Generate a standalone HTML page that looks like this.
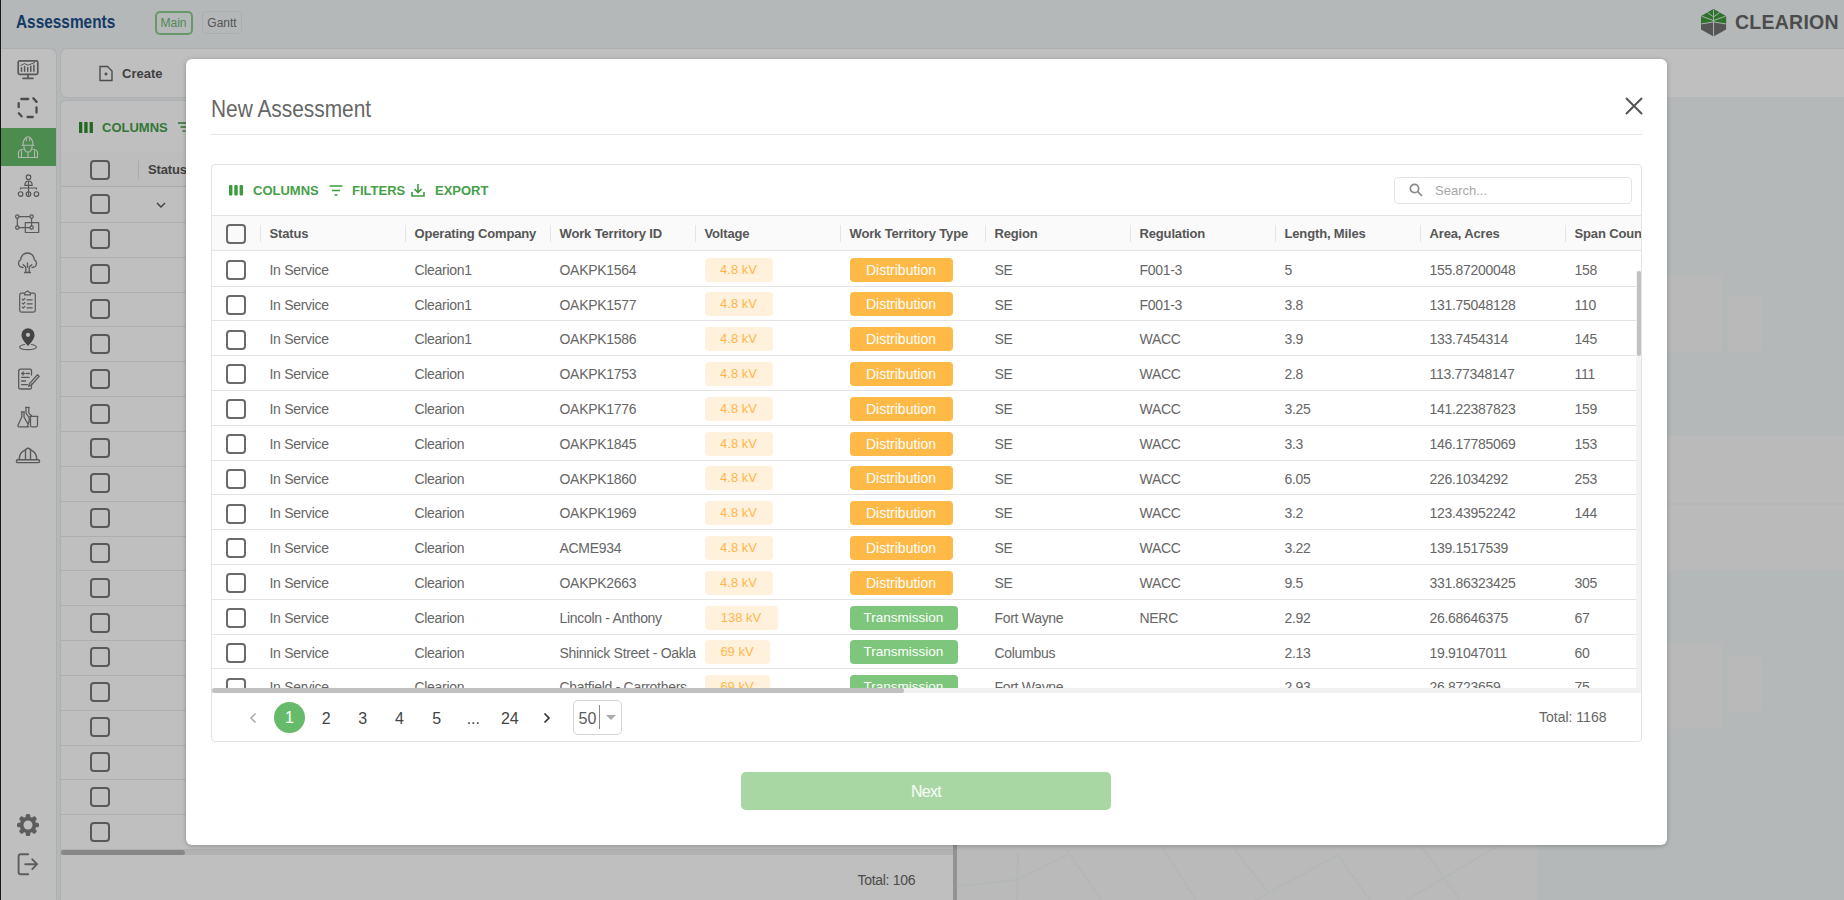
<!DOCTYPE html><html><head><meta charset="utf-8"><title>New Assessment</title><style>
*{box-sizing:border-box;margin:0;padding:0}
html,body{width:1844px;height:900px;overflow:hidden;font-family:"Liberation Sans",sans-serif;background:#f3f7f8;position:relative}
.abs{position:absolute}
#hdr{position:absolute;left:0;top:0;width:1844px;height:49px;background:#f1f6f7}
#side{position:absolute;left:1px;top:49px;width:55px;height:851px;background:#fff;border-radius:0 6px 0 0;box-shadow:0 0 2px rgba(0,0,0,.18)}
#createp{position:absolute;left:61px;top:49px;width:1800px;height:48px;background:#fff;border-radius:6px;box-shadow:0 0 2px rgba(0,0,0,.18)}
#tablep{position:absolute;left:61px;top:101px;width:894px;height:820px;background:#fff;border-radius:4px 4px 0 0;box-shadow:0 0 2px rgba(0,0,0,.18);overflow:hidden}
#map{position:absolute;left:957px;top:97px;width:887px;height:803px;background:#f2f6f7;overflow:hidden}
#overlay{position:absolute;left:0;top:0;width:1844px;height:900px;background:rgba(0,0,0,.25)}
#modal{position:absolute;left:186px;top:59px;width:1481px;height:786px;background:#fff;border-radius:6px;box-shadow:0 1px 5px rgba(0,0,0,.25)}
.cb{position:absolute;width:20px;height:20px;border:2px solid #6a6a6a;border-radius:4px;background:#fff}
.bcb{position:absolute;width:20px;height:20px;border:2px solid #777;border-radius:4px}
.t13{font-size:14px;letter-spacing:-0.3px;color:#666;white-space:nowrap;position:absolute;line-height:14px}
.th{font-size:13px;font-weight:bold;color:#565656;letter-spacing:-0.15px;white-space:nowrap;position:absolute}
.chipD{position:absolute;height:24px;border-radius:4px;background:#ffb946;color:#fff;font-size:14px;text-align:center;line-height:24px;white-space:nowrap}
.chipT{position:absolute;height:24px;border-radius:4px;background:#7dc67b;color:#fff;font-size:13.5px;text-align:center;line-height:24px;white-space:nowrap}
.chipV{position:absolute;height:24px;border-radius:4px;background:#fff1dc;color:#ffb74d;font-size:13px;text-align:center;line-height:24px;white-space:nowrap}
.green{color:#45a048}
</style></head><body>
<div id="hdr">
<div class="abs" style="left:16px;top:11px;font-size:19px;font-weight:bold;color:#1b4f8a;white-space:nowrap;transform-origin:0 0;transform:scaleX(0.81)">Assessments</div>
<div class="abs" style="left:154.5px;top:10.5px;width:38px;height:24px;border:2px solid #8acb8c;border-radius:5px;font-size:12px;color:#6cb86e;text-align:center;line-height:21px">Main</div>
<div class="abs" style="left:202px;top:11px;width:40px;height:23px;border:1px solid #e4e8e9;border-radius:4px;font-size:12px;color:#707070;text-align:center;line-height:22px">Gantt</div>
<svg class="abs" style="left:1701.2px;top:8.6px;overflow:visible" width="25.1" height="27.4" viewBox="0 0 25.1 27.4"><polygon points="12.55,0 25.1,7.2 25.1,20.4 12.55,27.4 0,20.4 0,7.2" fill="#727272"/><polygon points="12.55,0 25.1,7.2 25.1,14.8 12.55,13.0 0,14.8 0,7.2" fill="#3d9a3c"/><path d="M12.55 0.5V27.4 M0.3 14.9L12.55 13.0L24.8 14.9 M0.6 7.2L12.55 11.6L24.5 7.2 M12.55 7.9L6.4 3.5 M12.55 7.9L18.7 3.5" stroke="#f3f6f7" stroke-width="0.9" fill="none"/></svg>
<div class="abs" style="left:1735px;top:13px;font-size:19.5px;line-height:19.5px;font-weight:bold;color:#666;letter-spacing:0.25px;white-space:nowrap">CLEARION</div>
</div>
<div class="abs" style="left:0;top:0;width:1px;height:900px;background:#222"></div>
<div id="side">
<div class="abs" style="left:0;top:78.5px;width:55px;height:38.5px;background:#66bb6a"></div>
</div>
<svg class="abs" style="left:16px;top:58px" width="24" height="22" viewBox="0 0 24 22" fill="none" stroke="#777" stroke-width="1.3" stroke-linecap="round" stroke-linejoin="round"><rect x="2.2" y="2.8" width="19.6" height="13.6" rx="1.6" stroke-width="1.7"/><path d="M7 20.3h10 M12 16.4v3.5" stroke-width="1.7"/><path d="M5.5 13.2V9.8 M8.6 13.2V8.6 M11.7 13.2V9.4 M14.8 13.2V8.2 M17.9 13.2V7.2" stroke-width="1.5"/><path d="M4.8 7.4L8.5 5.6L12 7.2L18.6 4.6" stroke-width="1"/></svg>
<svg class="abs" style="left:16px;top:96px" width="24" height="24" viewBox="0 0 24 24" fill="none" stroke="#666" stroke-width="2.3" stroke-linecap="round" stroke-linejoin="round"><path d="M5.3 3h6.9 M17.3 2.3l3.3 3.6 M20.5 11.5v5 M11.5 21h5.3 M2.8 17.3l2.8 3 M2.7 7.2v4"/></svg>
<svg class="abs" style="left:17px;top:134px" width="22" height="25" viewBox="0 0 22 25" fill="none" stroke="#eef5ee" stroke-width="1.1" stroke-linecap="round" stroke-linejoin="round"><path d="M5 11.2h12 M6 11c0-4.8 2.2-8.2 5-8.2s5 3.4 5 8.2 M9.3 3.2v3.5 M12.7 3.2v3.5 M6.8 11.5c.2 4 1.9 6.6 4.2 6.6s4-2.6 4.2-6.6 M1.5 23.5v-5c0-1.9 1.5-2.7 4.6-3.2 M20.5 23.5v-5c0-1.9-1.5-2.7-4.6-3.2 M1.5 23.5h19 M11 18.2v5.3 M4.5 17v6.5 M17.5 17v6.5"/></svg>
<svg class="abs" style="left:17px;top:173px" width="23" height="25" viewBox="0 0 23 25" fill="none" stroke="#707070" stroke-width="1.15" stroke-linecap="round" stroke-linejoin="round"><circle cx="11.5" cy="4.2" r="2.3"/><path d="M7.8 12.4c0-2.6 1.6-4.4 3.7-4.4s3.7 1.8 3.7 4.4z M11.5 8v13.8 M3.5 16v-1 h16v1"/><circle cx="3.6" cy="21" r="2.3"/><circle cx="11.5" cy="21" r="2.3"/><circle cx="19.4" cy="21" r="2.3"/></svg>
<svg class="abs" style="left:15px;top:214px" width="26" height="21" viewBox="0 0 26 21" fill="none" stroke="#777" stroke-width="1.2" stroke-linecap="round" stroke-linejoin="round"><path d="M4 2.6h10.8 M2.3 4.3v7.6 M4 13.6h10.8 M16.6 4.3v7.6"/><circle cx="2.3" cy="2.6" r="1.7"/><circle cx="16.6" cy="2.6" r="1.7"/><circle cx="2.3" cy="13.6" r="1.7"/><circle cx="16.6" cy="13.6" r="1.7"/><rect x="10.3" y="8.7" width="13.4" height="9.8"/></svg>
<svg class="abs" style="left:16px;top:251px" width="23" height="23" viewBox="0 0 23 23" fill="none" stroke="#777" stroke-width="1.3" stroke-linecap="round" stroke-linejoin="round"><path d="M9.8 21.3v-5.2l-2.6-2.4 M13.2 21.3v-5.2l2.6-2.4 M11.5 16v-4 M8.5 21.5h6 M7 16.5C4.3 16.5 2.5 14.6 2.5 12.3c0-1.6.9-3 2.2-3.6C4.8 5.2 7.5 2 11.5 2s6.7 3.2 6.8 6.7c1.3.6 2.2 2 2.2 3.6 0 2.3-1.8 4.2-4.5 4.2"/></svg>
<svg class="abs" style="left:17px;top:289px" width="21" height="24" viewBox="0 0 21 24" fill="none" stroke="#777" stroke-width="1.2" stroke-linecap="round" stroke-linejoin="round"><path d="M7.5 4.2H4.5A1.8 1.8 0 0 0 2.7 6v15.3a1.8 1.8 0 0 0 1.8 1.8h12A1.8 1.8 0 0 0 18.3 21.3V6a1.8 1.8 0 0 0-1.8-1.8h-3 M7.5 5.8c0-1.6.2-2 1-2.5l2-1.3 2 1.3c.8.5 1 .9 1 2.5z M5.3 10.2l1 1 1.6-1.8 M5.3 14.2l1 1 1.6-1.8 M5.3 18.2l1 1 1.6-1.8 M10 10.8h5.2 M10 14.8h5.2 M10 18.8h5.2"/></svg>
<svg class="abs" style="left:17px;top:328px" width="22" height="24" viewBox="0 0 22 24" fill="none" stroke="#777" stroke-width="1.2" stroke-linecap="round" stroke-linejoin="round"><path d="M11 17.2c-3.4-3.8-6-6.8-6-10.3a6 6 0 0 1 12 0c0 3.5-2.6 6.5-6 10.3z" fill="#5a5a5a" stroke="#5a5a5a"/><circle cx="11" cy="6.8" r="2.1" fill="#fff" stroke="none"/><path d="M7.6 16.5C4.5 17 2.7 17.9 2.7 19c0 1.6 3.7 2.6 8.3 2.6s8.3-1 8.3-2.6c0-1.1-1.8-2-4.9-2.5"/></svg>
<svg class="abs" style="left:16px;top:367px" width="24" height="24" viewBox="0 0 24 24" fill="none" stroke="#777" stroke-width="1.3" stroke-linecap="round" stroke-linejoin="round"><path d="M15.5 8V3.8a1.6 1.6 0 0 0-1.6-1.6H4.3a1.6 1.6 0 0 0-1.6 1.6v16.6a1.6 1.6 0 0 0 1.6 1.6h9.6a1.6 1.6 0 0 0 1.6-1.6v-3.4 M5.6 6.5h3 M7.1 5v3 M10.3 6.5h3 M5.6 10.3h7.6 M5.6 14h4 M5.6 17.7h5.8 M21.5 7.8l-8 8.8-.9 2.6 2.6-1 8-8.8z"/></svg>
<svg class="abs" style="left:16px;top:405px" width="25" height="25" viewBox="0 0 25 25" fill="none" stroke="#777" stroke-width="1.25" stroke-linecap="round" stroke-linejoin="round"><path d="M5.3 6.8h3.2 M5.8 6.8v5.2L2 20.2c-.4.9.2 1.6 1.1 1.6H13 M8 6.8v5.2l3.6 6.4 M9.6 2.4h3.6 M10 2.4v5.6c0 1.6 3.3 2.8 3.3 6.2 0 3.4-1.8 5.6-1.8 7.6 M12.8 2.4v5.6c0 .9 1.7 1.6 2.8 2.6 M13.9 11.4h8 M14.5 11.4v9.2c0 .7.5 1.2 1.2 1.2h4.6c.7 0 1.2-.5 1.2-1.2v-9.2"/></svg>
<svg class="abs" style="left:15px;top:445px" width="26" height="20" viewBox="0 0 26 20" fill="none" stroke="#777" stroke-width="1.4" stroke-linecap="round" stroke-linejoin="round"><path d="M2.8 14.8h20.4a1.4 1.4 0 0 1 0 2.8H2.8a1.4 1.4 0 0 1 0-2.8z M4.2 14.6C4.2 9.8 6.5 6.3 10.2 4.8 M21.8 14.6C21.8 9.8 19.5 6.3 15.8 4.8 M10.5 14.6V5.6c0-1.3 1.1-2.3 2.5-2.3s2.5 1 2.5 2.3v9"/></svg>
<svg class="abs" style="left:16.9px;top:814.2px" width="22" height="22" viewBox="-11 -11 22 22"><g fill="#7c7c7c"><circle r="8.3"/><rect x="-2.3" y="-11" width="4.6" height="5" rx="1.6" transform="rotate(0)"/><rect x="-2.3" y="-11" width="4.6" height="5" rx="1.6" transform="rotate(45)"/><rect x="-2.3" y="-11" width="4.6" height="5" rx="1.6" transform="rotate(90)"/><rect x="-2.3" y="-11" width="4.6" height="5" rx="1.6" transform="rotate(135)"/><rect x="-2.3" y="-11" width="4.6" height="5" rx="1.6" transform="rotate(180)"/><rect x="-2.3" y="-11" width="4.6" height="5" rx="1.6" transform="rotate(225)"/><rect x="-2.3" y="-11" width="4.6" height="5" rx="1.6" transform="rotate(270)"/><rect x="-2.3" y="-11" width="4.6" height="5" rx="1.6" transform="rotate(315)"/></g><circle r="4.5" fill="#fff"/></svg>
<svg class="abs" style="left:16px;top:852px" width="24" height="24" viewBox="0 0 24 24" fill="none" stroke="#7c7c7c" stroke-width="1.9" stroke-linecap="round" stroke-linejoin="round"><path d="M12.2 2.2H4.6a2 2 0 0 0-2 2v16a2 2 0 0 0 2 2h7.6 M9.2 12.2h11.8 M16.3 7.3l4.8 4.9-4.8 4.9"/></svg>
<div id="createp">
<svg class="abs" style="left:37px;top:16px" width="16" height="17" viewBox="0 0 16 17" fill="none" stroke="#666" stroke-width="1.4"><path d="M2 1.5h7.5l4.5 4.5v9.5h-12z"/><path d="M8 7.5v3 M6.5 9h3"/></svg>
<div class="abs" style="left:61px;top:17px;font-size:13px;font-weight:bold;color:#555;white-space:nowrap">Create</div>
</div>
<div id="tablep">
<svg class="abs" style="left:18px;top:21px" width="14" height="11" viewBox="0 0 14 11"><rect x="0" y="0" width="3.3" height="11" fill="#2e8b2e"/><rect x="5.3" y="0" width="3.3" height="11" fill="#2e8b2e"/><rect x="10.6" y="0" width="3.3" height="11" fill="#2e8b2e"/></svg>
<div class="abs green" style="left:41px;top:19px;font-size:13px;font-weight:bold;white-space:nowrap">COLUMNS</div>
<svg class="abs" style="left:117px;top:21px" width="12" height="10" viewBox="0 0 12 10" stroke="#3e9b3e" stroke-width="1.5"><path d="M0 1h12 M2.5 5h7 M4.5 9h3"/></svg>
<div class="abs" style="left:0;top:51px;width:894px;height:1px;background:#e3e3e3"></div>
<div class="abs" style="left:0;top:51px;width:894px;height:35px;background:#fcfcfc;border-bottom:1px solid #e3e3e3"></div>
<div class="abs" style="left:77px;top:60px;width:1px;height:18px;background:#e5e5e5"></div>
<div class="th" style="left:87px;top:61px">Status</div>
<div class="bcb" style="left:28.5px;top:59px;background:#fff"></div>
<div class="bcb" style="left:28.5px;top:93.40px;background:#fff"></div>
<div class="abs" style="left:0;top:120.85px;width:894px;height:1px;background:#e8e8e8"></div>
<div class="bcb" style="left:28.5px;top:128.25px;background:#fff"></div>
<div class="abs" style="left:0;top:155.70px;width:894px;height:1px;background:#e8e8e8"></div>
<div class="bcb" style="left:28.5px;top:163.10px;background:#fff"></div>
<div class="abs" style="left:0;top:190.55px;width:894px;height:1px;background:#e8e8e8"></div>
<div class="bcb" style="left:28.5px;top:197.95px;background:#fff"></div>
<div class="abs" style="left:0;top:225.40px;width:894px;height:1px;background:#e8e8e8"></div>
<div class="bcb" style="left:28.5px;top:232.80px;background:#fff"></div>
<div class="abs" style="left:0;top:260.25px;width:894px;height:1px;background:#e8e8e8"></div>
<div class="bcb" style="left:28.5px;top:267.65px;background:#fff"></div>
<div class="abs" style="left:0;top:295.10px;width:894px;height:1px;background:#e8e8e8"></div>
<div class="bcb" style="left:28.5px;top:302.50px;background:#fff"></div>
<div class="abs" style="left:0;top:329.95px;width:894px;height:1px;background:#e8e8e8"></div>
<div class="bcb" style="left:28.5px;top:337.35px;background:#fff"></div>
<div class="abs" style="left:0;top:364.80px;width:894px;height:1px;background:#e8e8e8"></div>
<div class="bcb" style="left:28.5px;top:372.20px;background:#fff"></div>
<div class="abs" style="left:0;top:399.65px;width:894px;height:1px;background:#e8e8e8"></div>
<div class="bcb" style="left:28.5px;top:407.05px;background:#fff"></div>
<div class="abs" style="left:0;top:434.50px;width:894px;height:1px;background:#e8e8e8"></div>
<div class="bcb" style="left:28.5px;top:441.90px;background:#fff"></div>
<div class="abs" style="left:0;top:469.35px;width:894px;height:1px;background:#e8e8e8"></div>
<div class="bcb" style="left:28.5px;top:476.75px;background:#fff"></div>
<div class="abs" style="left:0;top:504.20px;width:894px;height:1px;background:#e8e8e8"></div>
<div class="bcb" style="left:28.5px;top:511.60px;background:#fff"></div>
<div class="abs" style="left:0;top:539.05px;width:894px;height:1px;background:#e8e8e8"></div>
<div class="bcb" style="left:28.5px;top:546.45px;background:#fff"></div>
<div class="abs" style="left:0;top:573.90px;width:894px;height:1px;background:#e8e8e8"></div>
<div class="bcb" style="left:28.5px;top:581.30px;background:#fff"></div>
<div class="abs" style="left:0;top:608.75px;width:894px;height:1px;background:#e8e8e8"></div>
<div class="bcb" style="left:28.5px;top:616.15px;background:#fff"></div>
<div class="abs" style="left:0;top:643.60px;width:894px;height:1px;background:#e8e8e8"></div>
<div class="bcb" style="left:28.5px;top:651.00px;background:#fff"></div>
<div class="abs" style="left:0;top:678.45px;width:894px;height:1px;background:#e8e8e8"></div>
<div class="bcb" style="left:28.5px;top:685.85px;background:#fff"></div>
<div class="abs" style="left:0;top:713.30px;width:894px;height:1px;background:#e8e8e8"></div>
<div class="bcb" style="left:28.5px;top:720.70px;background:#fff"></div>
<div class="abs" style="left:0;top:748.15px;width:894px;height:1px;background:#e8e8e8"></div>
<svg class="abs" style="left:95px;top:101px" width="10" height="6" viewBox="0 0 10 6" fill="none" stroke="#555" stroke-width="1.4"><path d="M1 1l4 4 4-4"/></svg>
<div class="abs" style="left:0;top:749px;width:894px;height:5px;background:#eee"></div>
<div class="abs" style="left:0;top:749px;width:124px;height:5px;border-radius:3px;background:#b5b5b5"></div>
<div class="abs" style="left:796.5px;top:772.15px;font-size:14px;line-height:14px;letter-spacing:-0.3px;color:#666;white-space:nowrap">Total: 106</div>
</div>
<div class="abs" style="left:953px;top:845px;width:4px;height:55px;background:#c4c4c4"></div>
<div id="map">
<div class="abs" style="left:0;top:339px;width:887px;height:134px;background:#f8f8f8"></div>
<div class="abs" style="left:710px;top:178px;width:55px;height:76px;background:#f7f7f7"></div>
<div class="abs" style="left:771px;top:198px;width:34px;height:56px;background:#f7f7f7"></div>
<div class="abs" style="left:710px;top:546px;width:55px;height:86px;background:#f7f7f7"></div>
<div class="abs" style="left:771px;top:560px;width:34px;height:54px;background:#f7f7f7"></div>
<div class="abs" style="left:0;top:748px;width:580px;height:60px;background:#f8f8f8"></div>
<svg class="abs" style="left:0;top:0" width="887" height="803" viewBox="957 97 887 803" fill="none" stroke="#f0f4f5" stroke-width="1.8"><path d="M957 886L1017 880 M1018 852L1017 900 M1017 880L1067 855 M1067 850L1101 900 M1162 847L1196 900 M1233 847L1267 891 M1255 900L1338 855 M1338 855L1370 900 M1422 847L1460 900 M1407 900L1496 847"/><path d="M957 504H1844" stroke-width="2"/></svg>
</div>
<div id="overlay"></div>
<div id="modal"><div class="abs" style="left:25px;top:37.68px;font-size:24px;line-height:24px;color:#666;white-space:nowrap;transform-origin:0 0;transform:scaleX(0.87)">New Assessment</div><svg class="abs" style="left:1439px;top:38px" width="18" height="18" viewBox="0 0 18 18" stroke="#555" stroke-width="2" stroke-linecap="round"><path d="M1.5 1.5l15 15 M16.5 1.5l-15 15"/></svg><div class="abs" style="left:25px;top:75px;width:1431px;height:1px;background:#e6e6e6"></div><div class="abs" style="left:25px;top:105px;width:1431px;height:578px;border:1px solid #e3e3e3;border-radius:4px;overflow:hidden"><svg class="abs" style="left:17px;top:20px" width="14" height="11" viewBox="0 0 14 11"><rect x="0" y="0" width="3.4" height="10.5" rx="0.9" fill="#3a9a3d"/><rect x="5.3" y="0" width="3.4" height="10.5" rx="0.9" fill="#3a9a3d"/><rect x="10.6" y="0" width="3.4" height="10.5" rx="0.9" fill="#3a9a3d"/></svg><div class="abs green" style="left:41px;top:18px;font-size:13px;font-weight:bold;white-space:nowrap">COLUMNS</div><svg class="abs" style="left:117px;top:20px" width="14" height="11" viewBox="0 0 14 11" stroke="#3e9b3e" stroke-width="1.6"><path d="M0.5 1h13 M3 5.5h8 M5.5 10h3"/></svg><div class="abs green" style="left:140px;top:18px;font-size:13px;font-weight:bold;white-space:nowrap">FILTERS</div><svg class="abs" style="left:199px;top:18px" width="14" height="14" viewBox="0 0 14 14" fill="none" stroke="#3e9b3e" stroke-width="1.6"><path d="M7 1v8 M3.5 6l3.5 3.5 3.5-3.5 M1 9v4h12V9"/></svg><div class="abs green" style="left:223px;top:18px;font-size:13px;font-weight:bold;white-space:nowrap">EXPORT</div><div class="abs" style="left:1182px;top:12px;width:238px;height:27px;border:1px solid #e3e3e3;border-radius:4px"></div><svg class="abs" style="left:1197px;top:18px" width="14" height="14" viewBox="0 0 14 14" fill="none" stroke="#8a8a8a" stroke-width="1.7"><circle cx="5.5" cy="5.5" r="4.2"/><path d="M8.7 8.7l4.3 4.3"/></svg><div class="abs" style="left:1223px;top:18px;font-size:13px;color:#a8a8a8;white-space:nowrap">Search...</div><div class="abs" style="left:0;top:50px;width:1431px;height:36px;background:#fafafa;border-top:1px solid #e3e3e3;border-bottom:1px solid #e3e3e3"></div><div class="cb" style="left:14px;top:59px;background:transparent"></div><div class="abs" style="left:48px;top:60px;width:1px;height:17px;background:#e5e5e5"></div><div class="th" style="left:57.5px;top:61px">Status</div><div class="abs" style="left:193px;top:60px;width:1px;height:17px;background:#e5e5e5"></div><div class="th" style="left:202.5px;top:61px">Operating Company</div><div class="abs" style="left:338px;top:60px;width:1px;height:17px;background:#e5e5e5"></div><div class="th" style="left:347.5px;top:61px">Work Territory ID</div><div class="abs" style="left:483px;top:60px;width:1px;height:17px;background:#e5e5e5"></div><div class="th" style="left:492.5px;top:61px">Voltage</div><div class="abs" style="left:628px;top:60px;width:1px;height:17px;background:#e5e5e5"></div><div class="th" style="left:637.5px;top:61px">Work Territory Type</div><div class="abs" style="left:773px;top:60px;width:1px;height:17px;background:#e5e5e5"></div><div class="th" style="left:782.5px;top:61px">Region</div><div class="abs" style="left:918px;top:60px;width:1px;height:17px;background:#e5e5e5"></div><div class="th" style="left:927.5px;top:61px">Regulation</div><div class="abs" style="left:1063px;top:60px;width:1px;height:17px;background:#e5e5e5"></div><div class="th" style="left:1072.5px;top:61px">Length, Miles</div><div class="abs" style="left:1208px;top:60px;width:1px;height:17px;background:#e5e5e5"></div><div class="th" style="left:1217.5px;top:61px">Area, Acres</div><div class="abs" style="left:1353px;top:60px;width:1px;height:17px;background:#e5e5e5"></div><div class="th" style="left:1362.5px;top:61px">Span Count</div><div class="abs" style="left:0;top:86px;width:1431px;height:437px;overflow:hidden"><div class="abs" style="left:0;top:34.60px;width:1424px;height:1px;background:#e3e3e3"></div><div class="cb" style="left:14px;top:9.00px"></div><div class="t13" style="left:57.5px;top:11.85px">In Service</div><div class="t13" style="left:202.5px;top:11.85px">Clearion1</div><div class="t13" style="left:347.5px;top:11.85px">OAKPK1564</div><div class="chipV" style="left:492.5px;top:6.50px;width:68px">4.8 kV</div><div class="chipD" style="left:637.5px;top:6.50px;width:103px">Distribution</div><div class="t13" style="left:782.5px;top:11.85px">SE</div><div class="t13" style="left:927.5px;top:11.85px">F001-3</div><div class="t13" style="left:1072.5px;top:11.85px">5</div><div class="t13" style="left:1217.5px;top:11.85px">155.87200048</div><div class="t13" style="left:1362.5px;top:11.85px">158</div><div class="abs" style="left:0;top:69.40px;width:1424px;height:1px;background:#e3e3e3"></div><div class="cb" style="left:14px;top:43.80px"></div><div class="t13" style="left:57.5px;top:46.65px">In Service</div><div class="t13" style="left:202.5px;top:46.65px">Clearion1</div><div class="t13" style="left:347.5px;top:46.65px">OAKPK1577</div><div class="chipV" style="left:492.5px;top:41.30px;width:68px">4.8 kV</div><div class="chipD" style="left:637.5px;top:41.30px;width:103px">Distribution</div><div class="t13" style="left:782.5px;top:46.65px">SE</div><div class="t13" style="left:927.5px;top:46.65px">F001-3</div><div class="t13" style="left:1072.5px;top:46.65px">3.8</div><div class="t13" style="left:1217.5px;top:46.65px">131.75048128</div><div class="t13" style="left:1362.5px;top:46.65px">110</div><div class="abs" style="left:0;top:104.20px;width:1424px;height:1px;background:#e3e3e3"></div><div class="cb" style="left:14px;top:78.60px"></div><div class="t13" style="left:57.5px;top:81.45px">In Service</div><div class="t13" style="left:202.5px;top:81.45px">Clearion1</div><div class="t13" style="left:347.5px;top:81.45px">OAKPK1586</div><div class="chipV" style="left:492.5px;top:76.10px;width:68px">4.8 kV</div><div class="chipD" style="left:637.5px;top:76.10px;width:103px">Distribution</div><div class="t13" style="left:782.5px;top:81.45px">SE</div><div class="t13" style="left:927.5px;top:81.45px">WACC</div><div class="t13" style="left:1072.5px;top:81.45px">3.9</div><div class="t13" style="left:1217.5px;top:81.45px">133.7454314</div><div class="t13" style="left:1362.5px;top:81.45px">145</div><div class="abs" style="left:0;top:139.00px;width:1424px;height:1px;background:#e3e3e3"></div><div class="cb" style="left:14px;top:113.40px"></div><div class="t13" style="left:57.5px;top:116.25px">In Service</div><div class="t13" style="left:202.5px;top:116.25px">Clearion</div><div class="t13" style="left:347.5px;top:116.25px">OAKPK1753</div><div class="chipV" style="left:492.5px;top:110.90px;width:68px">4.8 kV</div><div class="chipD" style="left:637.5px;top:110.90px;width:103px">Distribution</div><div class="t13" style="left:782.5px;top:116.25px">SE</div><div class="t13" style="left:927.5px;top:116.25px">WACC</div><div class="t13" style="left:1072.5px;top:116.25px">2.8</div><div class="t13" style="left:1217.5px;top:116.25px">113.77348147</div><div class="t13" style="left:1362.5px;top:116.25px">111</div><div class="abs" style="left:0;top:173.80px;width:1424px;height:1px;background:#e3e3e3"></div><div class="cb" style="left:14px;top:148.20px"></div><div class="t13" style="left:57.5px;top:151.05px">In Service</div><div class="t13" style="left:202.5px;top:151.05px">Clearion</div><div class="t13" style="left:347.5px;top:151.05px">OAKPK1776</div><div class="chipV" style="left:492.5px;top:145.70px;width:68px">4.8 kV</div><div class="chipD" style="left:637.5px;top:145.70px;width:103px">Distribution</div><div class="t13" style="left:782.5px;top:151.05px">SE</div><div class="t13" style="left:927.5px;top:151.05px">WACC</div><div class="t13" style="left:1072.5px;top:151.05px">3.25</div><div class="t13" style="left:1217.5px;top:151.05px">141.22387823</div><div class="t13" style="left:1362.5px;top:151.05px">159</div><div class="abs" style="left:0;top:208.60px;width:1424px;height:1px;background:#e3e3e3"></div><div class="cb" style="left:14px;top:183.00px"></div><div class="t13" style="left:57.5px;top:185.85px">In Service</div><div class="t13" style="left:202.5px;top:185.85px">Clearion</div><div class="t13" style="left:347.5px;top:185.85px">OAKPK1845</div><div class="chipV" style="left:492.5px;top:180.50px;width:68px">4.8 kV</div><div class="chipD" style="left:637.5px;top:180.50px;width:103px">Distribution</div><div class="t13" style="left:782.5px;top:185.85px">SE</div><div class="t13" style="left:927.5px;top:185.85px">WACC</div><div class="t13" style="left:1072.5px;top:185.85px">3.3</div><div class="t13" style="left:1217.5px;top:185.85px">146.17785069</div><div class="t13" style="left:1362.5px;top:185.85px">153</div><div class="abs" style="left:0;top:243.40px;width:1424px;height:1px;background:#e3e3e3"></div><div class="cb" style="left:14px;top:217.80px"></div><div class="t13" style="left:57.5px;top:220.65px">In Service</div><div class="t13" style="left:202.5px;top:220.65px">Clearion</div><div class="t13" style="left:347.5px;top:220.65px">OAKPK1860</div><div class="chipV" style="left:492.5px;top:215.30px;width:68px">4.8 kV</div><div class="chipD" style="left:637.5px;top:215.30px;width:103px">Distribution</div><div class="t13" style="left:782.5px;top:220.65px">SE</div><div class="t13" style="left:927.5px;top:220.65px">WACC</div><div class="t13" style="left:1072.5px;top:220.65px">6.05</div><div class="t13" style="left:1217.5px;top:220.65px">226.1034292</div><div class="t13" style="left:1362.5px;top:220.65px">253</div><div class="abs" style="left:0;top:278.20px;width:1424px;height:1px;background:#e3e3e3"></div><div class="cb" style="left:14px;top:252.60px"></div><div class="t13" style="left:57.5px;top:255.45px">In Service</div><div class="t13" style="left:202.5px;top:255.45px">Clearion</div><div class="t13" style="left:347.5px;top:255.45px">OAKPK1969</div><div class="chipV" style="left:492.5px;top:250.10px;width:68px">4.8 kV</div><div class="chipD" style="left:637.5px;top:250.10px;width:103px">Distribution</div><div class="t13" style="left:782.5px;top:255.45px">SE</div><div class="t13" style="left:927.5px;top:255.45px">WACC</div><div class="t13" style="left:1072.5px;top:255.45px">3.2</div><div class="t13" style="left:1217.5px;top:255.45px">123.43952242</div><div class="t13" style="left:1362.5px;top:255.45px">144</div><div class="abs" style="left:0;top:313.00px;width:1424px;height:1px;background:#e3e3e3"></div><div class="cb" style="left:14px;top:287.40px"></div><div class="t13" style="left:57.5px;top:290.25px">In Service</div><div class="t13" style="left:202.5px;top:290.25px">Clearion</div><div class="t13" style="left:347.5px;top:290.25px">ACME934</div><div class="chipV" style="left:492.5px;top:284.90px;width:68px">4.8 kV</div><div class="chipD" style="left:637.5px;top:284.90px;width:103px">Distribution</div><div class="t13" style="left:782.5px;top:290.25px">SE</div><div class="t13" style="left:927.5px;top:290.25px">WACC</div><div class="t13" style="left:1072.5px;top:290.25px">3.22</div><div class="t13" style="left:1217.5px;top:290.25px">139.1517539</div><div class="abs" style="left:0;top:347.80px;width:1424px;height:1px;background:#e3e3e3"></div><div class="cb" style="left:14px;top:322.20px"></div><div class="t13" style="left:57.5px;top:325.05px">In Service</div><div class="t13" style="left:202.5px;top:325.05px">Clearion</div><div class="t13" style="left:347.5px;top:325.05px">OAKPK2663</div><div class="chipV" style="left:492.5px;top:319.70px;width:68px">4.8 kV</div><div class="chipD" style="left:637.5px;top:319.70px;width:103px">Distribution</div><div class="t13" style="left:782.5px;top:325.05px">SE</div><div class="t13" style="left:927.5px;top:325.05px">WACC</div><div class="t13" style="left:1072.5px;top:325.05px">9.5</div><div class="t13" style="left:1217.5px;top:325.05px">331.86323425</div><div class="t13" style="left:1362.5px;top:325.05px">305</div><div class="abs" style="left:0;top:382.60px;width:1424px;height:1px;background:#e3e3e3"></div><div class="cb" style="left:14px;top:357.00px"></div><div class="t13" style="left:57.5px;top:359.85px">In Service</div><div class="t13" style="left:202.5px;top:359.85px">Clearion</div><div class="t13" style="left:347.5px;top:359.85px">Lincoln - Anthony</div><div class="chipV" style="left:492.5px;top:354.50px;width:73px">138 kV</div><div class="chipT" style="left:637.5px;top:354.50px;width:108px">Transmission</div><div class="t13" style="left:782.5px;top:359.85px">Fort Wayne</div><div class="t13" style="left:927.5px;top:359.85px">NERC</div><div class="t13" style="left:1072.5px;top:359.85px">2.92</div><div class="t13" style="left:1217.5px;top:359.85px">26.68646375</div><div class="t13" style="left:1362.5px;top:359.85px">67</div><div class="abs" style="left:0;top:417.40px;width:1424px;height:1px;background:#e3e3e3"></div><div class="cb" style="left:14px;top:391.80px"></div><div class="t13" style="left:57.5px;top:394.65px">In Service</div><div class="t13" style="left:202.5px;top:394.65px">Clearion</div><div class="t13" style="left:347.5px;top:394.65px">Shinnick Street - Oakla</div><div class="chipV" style="left:492.5px;top:389.30px;width:65px">69 kV</div><div class="chipT" style="left:637.5px;top:389.30px;width:108px">Transmission</div><div class="t13" style="left:782.5px;top:394.65px">Columbus</div><div class="t13" style="left:1072.5px;top:394.65px">2.13</div><div class="t13" style="left:1217.5px;top:394.65px">19.91047011</div><div class="t13" style="left:1362.5px;top:394.65px">60</div><div class="abs" style="left:0;top:452.20px;width:1424px;height:1px;background:#e3e3e3"></div><div class="cb" style="left:14px;top:426.60px"></div><div class="t13" style="left:57.5px;top:429.45px">In Service</div><div class="t13" style="left:202.5px;top:429.45px">Clearion</div><div class="t13" style="left:347.5px;top:429.45px">Chatfield - Carrothers</div><div class="chipV" style="left:492.5px;top:424.10px;width:65px">69 kV</div><div class="chipT" style="left:637.5px;top:424.10px;width:108px">Transmission</div><div class="t13" style="left:782.5px;top:429.45px">Fort Wayne</div><div class="t13" style="left:1072.5px;top:429.45px">2.93</div><div class="t13" style="left:1217.5px;top:429.45px">26.8723659</div><div class="t13" style="left:1362.5px;top:429.45px">75</div></div><div class="abs" style="left:1424px;top:106px;width:6px;height:417px;background:#f3f3f3"></div><div class="abs" style="left:1424.5px;top:106px;width:4.5px;height:85px;border-radius:3px;background:#c1c1c1"></div><div class="abs" style="left:0;top:523px;width:1431px;height:5px;background:#f1f1f1"></div><div class="abs" style="left:0;top:523px;width:692px;height:5px;border-radius:3px;background:#c1c1c1"></div><svg class="abs" style="left:37px;top:547px" width="8" height="12" viewBox="0 0 8 12" fill="none" stroke="#aaa" stroke-width="1.5"><path d="M6.5 1.5L2 6l4.5 4.5"/></svg><div class="abs" style="left:62px;top:537px;width:31px;height:31px;border-radius:50%;background:#66bb6a;color:#fff;font-size:16px;text-align:center;line-height:31px">1</div><div class="abs" style="left:94.30000000000001px;top:538px;width:40px;height:31px;color:#444;font-size:16px;text-align:center;line-height:31px">2</div><div class="abs" style="left:130.7px;top:538px;width:40px;height:31px;color:#444;font-size:16px;text-align:center;line-height:31px">3</div><div class="abs" style="left:167.5px;top:538px;width:40px;height:31px;color:#444;font-size:16px;text-align:center;line-height:31px">4</div><div class="abs" style="left:204.60000000000002px;top:538px;width:40px;height:31px;color:#444;font-size:16px;text-align:center;line-height:31px">5</div><div class="abs" style="left:241.3px;top:538px;width:40px;height:31px;color:#444;font-size:16px;text-align:center;line-height:31px">...</div><div class="abs" style="left:277.8px;top:538px;width:40px;height:31px;color:#444;font-size:16px;text-align:center;line-height:31px">24</div><svg class="abs" style="left:331px;top:547px" width="8" height="12" viewBox="0 0 8 12" fill="none" stroke="#333" stroke-width="1.7"><path d="M1.5 1.5L6 6l-4.5 4.5"/></svg><div class="abs" style="left:361.29999999999995px;top:535px;width:48.5px;height:34.5px;border:1.5px solid #d4d4d4;border-radius:5px"></div><div class="abs" style="left:366.5px;top:544.5px;font-size:16px;color:#5a5a5a">50</div><div class="abs" style="left:387px;top:540.3px;width:1px;height:23.3px;background:#8a8a8a"></div><svg class="abs" style="left:394px;top:550px" width="10" height="5" viewBox="0 0 10 5"><path d="M0 0h10L5 5z" fill="#aaa"/></svg><div class="abs" style="left:1327px;top:544px;font-size:14px;color:#666;white-space:nowrap">Total: 1168</div></div><div class="abs" style="left:555px;top:713px;width:370px;height:38px;border-radius:5px;background:#a9d7a4"></div><div class="abs" style="left:555px;top:724.66px;width:370px;color:#fafdfa;font-size:16px;line-height:16px;letter-spacing:-0.7px;text-align:center">Next</div></div>
</body></html>
